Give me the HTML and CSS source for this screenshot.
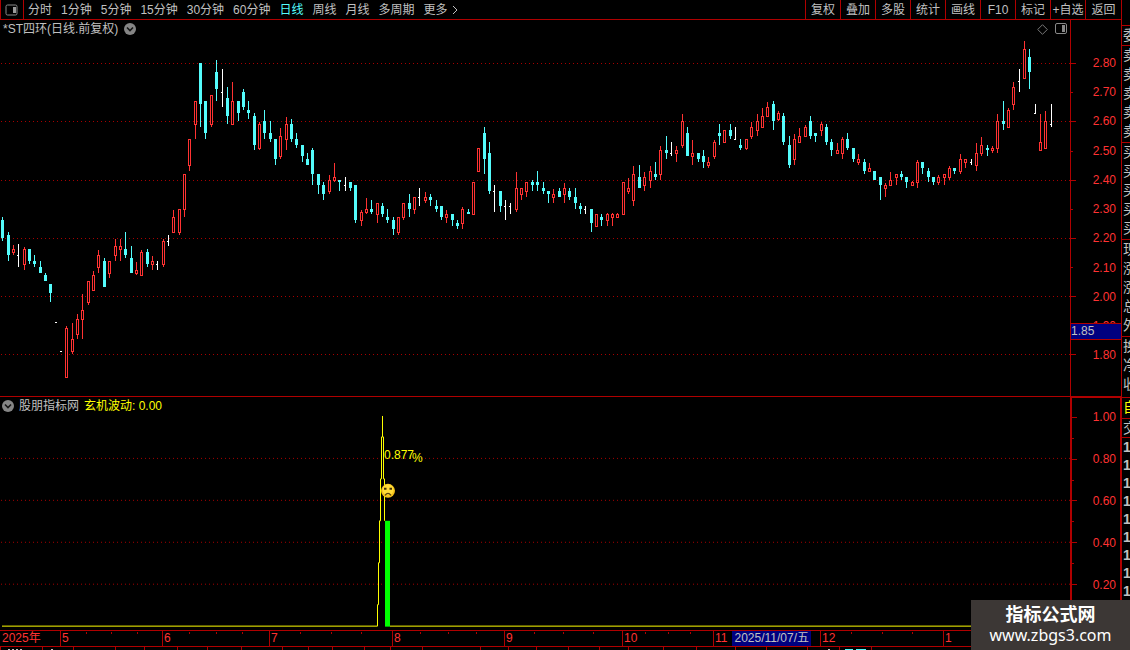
FILE: index.html
```html
<!DOCTYPE html>
<html lang="zh-CN">
<head>
<meta charset="utf-8">
<title>*ST四环 日线</title>
<link rel="stylesheet" href="styles.css">
</head>
<body>
<div class="terminal">
  <main class="workspace">
    <header class="toolbar">
      <button class="layout-toggle" aria-label="布局">
        <svg width="14" height="12" viewBox="0 0 14 12"><rect x="1" y="1" width="11" height="10" rx="1.5" fill="none" stroke="#8a8a8a"/><rect x="8" y="3" width="3" height="6" fill="#9a9a9a"/></svg>
      </button>
      <nav class="periods">
        <button>分时</button><button>1分钟</button><button>5分钟</button><button>15分钟</button><button>30分钟</button><button>60分钟</button><button class="active">日线</button><button>周线</button><button>月线</button><button>多周期</button><button class="more">更多<svg width="6" height="10" viewBox="0 0 6 10"><path d="M1 1L5 5L1 9" fill="none" stroke="#c0c0c0"/></svg></button>
      </nav>
      <div class="tools">
        <button>复权</button><button>叠加</button><button>多股</button><button>统计</button><button>画线</button><button>F10</button><button>标记</button><button>+自选</button><button>返回</button>
      </div>
    </header>

    <section class="panel price-panel">
      <div class="plot">
        <svg class="fill" id="price-chart" viewBox="0 20 1070 376" preserveAspectRatio="none" shape-rendering="crispEdges"></svg>
        <div class="caption">
          <span>*ST四环(日线.前复权)</span>
          <button class="icon" aria-label="展开"><svg width="12" height="12" viewBox="0 0 12 12"><circle cx="6" cy="6" r="6" fill="#858585"/><path d="M3 4.5L6 7.5L9 4.5" fill="none" stroke="#151515" stroke-width="1.6"/></svg></button>
          <div class="caption-tools">
            <button class="icon" aria-label="标注"><svg width="11" height="11" viewBox="0 0 11 11"><path d="M5.5 .7L10.3 5.5L5.5 10.3L.7 5.5Z" fill="none" stroke="#777"/></svg></button>
            <button class="icon" aria-label="侧栏"><svg width="12" height="12" viewBox="0 0 12 12"><rect x=".5" y=".5" width="11" height="10" rx="1.5" fill="none" stroke="#888"/><rect x="7" y="2" width="3" height="7" fill="#888"/></svg></button>
          </div>
        </div>
      </div>
      <div class="axis">
        <svg class="fill" id="price-ticks" viewBox="1071 20 50 376" preserveAspectRatio="none" shape-rendering="crispEdges"></svg>
        <div class="scale price-scale"><span>2.80</span><span>2.70</span><span>2.60</span><span>2.50</span><span>2.40</span><span>2.30</span><span>2.20</span><span>2.10</span><span>2.00</span><span>1.90</span><span>1.80</span></div>
        <div class="price-marker">1.85</div>
      </div>
    </section>

    <section class="panel indicator-panel">
      <div class="plot">
        <svg class="fill" id="indicator-chart" viewBox="0 397 1070 233" preserveAspectRatio="none">
          <g id="indicator-grid" shape-rendering="crispEdges"></g>
          <path shape-rendering="crispEdges" fill="none" stroke="#ffff00" d="M2 626.5H377.5V605H378.5V563H379.5V521H380.5V479H381.5V437H382.5V416M382.5 437H383.5V479H384.5V521M390 626.5H1070"/>
          <rect x="385" y="521" width="5" height="106" fill="#00ff00"/>
          <g class="signal"><text x="384" y="459">0.877</text><text x="412" y="462">%</text></g>
          <circle cx="388" cy="491" r="7" fill="#f5c21b"/><circle cx="388" cy="490" r="5.5" fill="#ffdc38"/>
          <path d="M384 488h2.5v2H384zM389.5 488h2.5v2h-2.5z" fill="#443000"/>
          <path d="M385 495.5Q388 491.5 391 495.5" fill="none" stroke="#59420a" stroke-width="1.2"/>
        </svg>
        <div class="caption">
          <button class="icon" aria-label="指标菜单"><svg width="12" height="12" viewBox="0 0 12 12"><circle cx="6" cy="6" r="6" fill="#858585"/><path d="M3 4.5L6 7.5L9 4.5" fill="none" stroke="#151515" stroke-width="1.6"/></svg></button>
          <span>股朋指标网</span><span class="value">玄机波动: 0.00</span>
        </div>
      </div>
      <div class="axis">
        <svg class="fill" id="indicator-ticks" viewBox="1072 397 48 233" preserveAspectRatio="none" shape-rendering="crispEdges"></svg>
        <div class="scale indicator-scale"><span>1.00</span><span>0.80</span><span>0.60</span><span>0.40</span><span>0.20</span></div>
      </div>
    </section>

    <footer class="timeline">
      <svg class="fill" id="time-ticks" viewBox="0 630 1121 20" preserveAspectRatio="none" shape-rendering="crispEdges"></svg>
      <div class="months"><span>2025年</span><span>5</span><span>6</span><span>7</span><span>8</span><span>9</span><span>10</span><span>11<time datetime="2025-11-07">2025/11/07/五</time></span><span>12</span><span>1</span></div>
    </footer>
  </main>

  <aside class="quotes">
    <div class="head">委</div>
    <div class="five"><span>卖</span><span>卖</span><span>卖</span><span>卖</span><span>卖</span></div>
    <div class="five"><span>买</span><span>买</span><span>买</span><span>买</span><span>买</span></div>
    <div class="five"><span>现</span><span>涨</span><span>涨</span><span>总</span><span>外</span></div>
    <div class="three"><span>换</span><span>净</span><span>收</span></div>
    <div class="tab">自</div>
    <div class="deal">交</div>
    <div class="times"><span>1</span><span>1</span><span>1</span><span>1</span><span>1</span><span>1</span><span>1</span><span>1</span><span>1</span></div>
  </aside>
  <div class="site-badge"><strong>指标公式网</strong><span>www.zbgs3.com</span></div>
</div>
<script src="chart.js"></script>
</body>
</html>
```

FILE: styles.css
```css
* { box-sizing: border-box; }
body { margin: 0; background: #000; color: #c0c0c0; font: 12px/16px "Liberation Sans", "Noto Sans CJK SC", sans-serif; }
button { margin: 0; padding: 0; border: 0; background: none; color: inherit; font: inherit; white-space: nowrap; }
svg { display: block; }

.terminal { position: relative; display: flex; height: 100vh; overflow: hidden; }
.workspace { flex: 1; min-width: 0; display: flex; flex-direction: column; }

.toolbar { display: flex; height: 20px; border-bottom: 1px solid #b00000; }
.layout-toggle { width: 24px; display: flex; align-items: center; justify-content: center; border: solid #b00000; border-width: 0 1px; }
.periods { display: flex; flex: 1; gap: 9px; padding-left: 4px; }
.periods .active { color: #54fcfc; }
.more { display: flex; align-items: center; gap: 4px; }
.tools { display: flex; }
.tools button { width: 35px; border-left: 1px solid #b00000; }
.tools button:last-child { width: 36px; }

.panel { display: flex; min-height: 0; }
.price-panel { flex: 377 1 0; border-bottom: 1px solid #b00000; }
.indicator-panel { flex: 233 1 0; }
.plot { position: relative; flex: 1; min-width: 0; }
.fill { position: absolute; inset: 0; width: 100%; height: 100%; }
.caption { position: relative; display: flex; align-items: center; gap: 6px; height: 18px; padding: 0 3px; }
.caption-tools { display: flex; align-items: center; gap: 7px; margin-left: auto; }
.icon { display: block; }
.indicator-panel .caption { padding: 0 2px; gap: 5px; }
.value, .signal { color: #ffff00; fill: #ffff00; }

.axis { position: relative; width: 51px; border-left: 1px solid #b00000; }
.indicator-panel .axis { border: solid #b00000; border-width: 1px 1px 0 2px; }
.scale { position: relative; display: flex; flex-direction: column; justify-content: space-between; color: #ff3232; text-align: right; padding-right: 5px; height: 100%; }
.price-scale { padding-top: 35px; padding-bottom: 33px; }
.indicator-scale { padding-top: 11px; padding-bottom: 37px; padding-right: 4px; }
.price-marker { position: absolute; top: 80.6%; left: 0; right: 0; height: 17px; border: solid #b00000; border-width: 1px 0; background: #000080; line-height: 15px; }

.timeline { position: relative; height: 20px; border-top: 1px solid #b00000; }
.months { position: relative; height: 16px; display: grid; grid-template-columns: 60fr 102fr 107fr 123fr 112fr 118fr 91fr 107fr 123fr 178fr; border-bottom: 1px solid #b00000; color: #ff3232; }
.months { grid-template-columns: 60fr 102fr 107fr 123fr 112fr 118fr 91fr 107fr 123fr 178fr; }
.months span { display: flex; min-width: 0; padding-left: 1px; border-left: 1px solid #b00000; line-height: 15px; }
.months span:first-child { border: 0; padding-left: 2px; }
.months time { margin-left: 5px; padding: 0 2px; background: #000080; color: #c0c0c0; white-space: nowrap; }

.quotes { width: 9px; overflow: hidden; border-left: 1px solid #b00000; font-size: 14px; line-height: 18px; padding-top: 25px; }
.quotes > div { overflow: hidden; padding-left: 1px; border-top: 1px solid #b00000; }
.quotes span { display: block; line-height: 19px; }
.head { height: 20px; }
.five { height: 97px; }
.three { height: 61px; }
.tab { height: 21px; color: #ffff00; }
.deal { height: 19px; }
.quotes .times span { line-height: 18px; font-weight: bold; }

.site-badge { position: absolute; right: 0; bottom: 0; width: 159px; height: 50px; display: flex; flex-direction: column; align-items: center; padding-top: 5px; background: #3c3735; color: #fff; }
.site-badge strong { font-size: 18px; line-height: 20px; }
.site-badge span { font: 16px/20px "Noto Sans", sans-serif; }
```

FILE: chart.js
```js
// u: rising bar, d: falling bar -> type x high open/close-top open/close-bottom low
// f: flat bar -> f x high low tick; n: dash -> n x y
const bars = `d 2 217 220 238 241;d 8 232 235 255 261;u 13 245 249 253 255;f 18 244 267 255;u 24 247 249 265 270
d 29 249 249 261 264;d 34 255 261 264 267;d 40 261 267 273 273;d 45 273 275 281 281;d 50 284 284 293 302
n 55 322;n 60 351;u 66 326 328 378 378;u 72 323 339 352 354;u 77 314 319 335 339
u 82 294 310 320 339;u 88 281 281 303 305;u 93 271 275 291 291;u 98 250 255 268 273;d 104 258 261 287 287
u 109 261 261 274 278;u 115 239 246 256 261;u 120 239 246 250 261;d 125 232 249 255 258;d 131 246 258 273 273
u 136 262 270 274 275;u 141 250 252 276 276;d 147 249 252 264 267;u 152 256 261 265 270;f 157 261 270 264
u 163 239 241 265 267;f 168 235 246 241;u 173 210 217 233 233;u 179 209 209 233 235;u 184 174 174 210 217
u 189 139 139 166 171;u 195 101 101 125 139;d 200 63 63 104 127;d 205 101 101 133 139;u 211 95 95 125 127
d 216 60 72 89 101;f 222 69 107 92;d 227 87 98 116 124;u 232 82 101 125 125;d 238 101 101 113 121
d 243 89 92 107 110;d 248 101 110 113 119;d 254 113 116 145 150;u 259 122 124 149 150;d 264 110 121 133 139
d 270 121 133 139 142;d 275 139 139 159 165;u 280 128 136 157 159;u 286 117 124 140 150;d 291 119 124 139 142
d 296 133 139 145 148;d 302 145 145 156 162;d 307 153 159 165 165;d 312 148 150 174 185;d 318 174 174 185 194
d 323 182 185 194 200;u 329 175 180 192 194;u 334 163 177 181 182;d 339 180 180 182 191;f 345 177 191 185
d 350 182 182 188 191;d 355 185 185 220 223;u 361 210 212 221 226;u 366 198 209 213 214;d 371 200 209 212 214
u 377 203 203 215 223;d 382 203 206 214 217;d 387 209 217 220 223;d 393 217 220 229 235;u 398 217 217 233 235
u 403 203 203 218 220;d 409 194 203 209 217;u 414 197 197 210 214;f 419 188 206 197;u 425 192 197 201 203
d 430 194 197 200 206;d 436 200 206 209 212;d 441 206 206 217 220;u 446 210 214 218 223;d 452 214 214 220 226
d 457 220 223 226 229;u 462 207 209 224 229;d 468 209 212 214 214;u 473 182 182 215 215;u 478 148 148 172 172
d 484 127 133 159 174;d 489 142 153 191 194;f 494 185 212 191;d 500 191 191 206 212;f 505 200 220 206
f 510 203 214 206;u 516 172 188 210 212;u 521 188 188 195 200;u 526 182 182 192 197;d 532 180 182 185 191
d 537 171 182 185 191;d 543 182 188 191 194;d 548 191 191 194 203;u 553 189 194 198 203;d 559 188 191 197 197
u 564 183 188 195 203;d 569 188 191 197 200;d 575 188 197 203 209;d 580 203 206 209 214;f 585 206 214 209
d 591 209 209 223 232;u 596 214 214 227 227;d 601 214 217 220 226;u 607 213 214 221 226;u 612 213 214 218 226
u 617 213 214 218 218;u 623 182 182 215 215;u 628 178 188 192 194;u 633 166 174 201 206;d 639 165 177 188 188
u 644 172 177 186 191;u 650 166 171 181 188;d 655 162 174 177 180;u 660 146 150 175 180;d 666 136 150 153 159
f 671 142 156 153;u 676 146 150 154 162;u 682 114 121 146 148;d 687 127 133 156 156;u 692 140 153 157 165
d 698 153 153 159 162;d 703 150 156 162 168;u 708 157 162 166 168;u 714 140 142 157 159;d 719 124 133 136 145
u 724 130 130 143 143;d 730 124 130 136 139;f 735 127 140 139;d 740 139 145 148 150;u 746 139 139 149 150
u 751 122 127 137 139;u 757 114 121 131 136;u 762 108 116 128 128;u 767 102 107 117 117;d 773 101 104 121 130
u 778 111 113 120 121;d 783 113 116 142 145;d 789 136 145 165 168;u 794 134 139 160 165;u 799 128 136 143 143
u 805 125 127 137 137;d 810 116 121 136 139;d 815 133 133 136 142;u 821 122 124 131 136;d 826 124 127 142 145
d 831 139 142 150 156;u 837 143 150 154 154;u 842 137 139 154 159;d 847 133 139 148 150;d 853 148 148 159 162
u 858 154 159 163 165;d 864 159 162 171 174;u 869 163 168 172 172;d 874 171 171 180 180;d 880 177 177 185 200
u 885 183 185 189 197;u 890 172 180 186 186;u 896 174 174 178 185;d 901 171 174 177 180;d 906 177 177 182 188
u 912 181 182 186 186;u 917 160 162 183 188;d 922 162 162 168 174;d 928 168 171 177 182;d 933 177 177 182 185
u 938 175 177 183 185;u 944 174 174 178 185;u 949 166 168 178 180;d 954 168 168 171 174;u 960 154 159 172 174
u 965 159 159 163 168;f 971 159 165 162;u 976 143 153 166 171;u 981 137 145 154 156;d 987 145 148 150 156
u 992 146 148 151 153;u 997 114 121 149 153;d 1003 101 121 124 130;u 1008 108 110 128 128;u 1013 82 87 105 110
f 1019 69 92 81;u 1024 41 49 79 79;d 1029 49 57 72 89;f 1035 104 114 113;u 1040 114 142 151 151
u 1045 111 121 149 149;f 1051 104 127 124`;

const box = (x, y, w, h) => `M${x} ${y}h${w}v${h}h${-w}z`;
const fills = { u: "", d: "", f: "" };
for (const bar of bars.split(/[;\n]/)) {
  const [type, ...values] = bar.split(" ");
  const [x, a, b, c, d] = values.map(Number);
  if (type === "n") {
    fills.f += box(x, a, 2, 1);
  } else if (type === "f") {
    fills.f += box(x, a, 1, b - a) + box(x - 1, c, 1, 1);
  } else if (type === "d") {
    fills.d += box(x - 1, b, 3, c - b);
    if (b > a) fills.d += box(x, a, 1, b - a);
    if (d > c) fills.d += box(x, c, 1, d - c);
  } else {
    fills.u += box(x - 1, b, 1, c - b) + box(x + 1, b, 1, c - b) + box(x, b, 1, 1) + box(x, c - 1, 1, 1);
    if (b > a) fills.u += box(x, a, 1, b - a);
    if (d > c) fills.u += box(x, c, 1, d - c);
  }
}

const dotted = rows => rows.map(y =>
  `<path d="M1 ${y}.5H1070" stroke="#a80000" stroke-dasharray="1 3"/>`).join("");
const path = (d, fill) => `<path d="${d}" fill="${fill}"/>`;
const byId = id => document.getElementById(id);

byId("price-chart").innerHTML = dotted([63, 121, 180, 238, 296, 354])
  + path(fills.u, "#ff3232") + path(fills.d, "#54fcfc") + path(fills.f, "#ffffff");
byId("indicator-grid").innerHTML = dotted([458, 500, 542, 584]);

const ticks = (x, major, minor) => path(
  major.map(y => box(x, y, 5, 1)).join("") + minor.map(y => box(x, y, 2, 1)).join(""), "#b00000");
byId("price-ticks").innerHTML = ticks(1071, [63, 121, 180, 238, 296, 354], [92, 151, 209, 267]);
byId("indicator-ticks").innerHTML = ticks(1072, [416, 458, 500, 542, 584], [437, 479, 521, 563, 605]);

const weeks = [86, 111, 137, 189, 216, 242, 300, 331, 361, 420, 448, 476, 534, 563, 593, 645, 668, 690, 851, 882, 912];
const lower = [0, 42, 73, 115, 144, 177, 207, 241, 282, 308, 332, 364, 390, 422, 480, 508, 536, 568, 599, 628, 663, 696, 735, 766, 807, 839, 871];
byId("time-ticks").innerHTML = path(
  weeks.map(x => box(x, 631, 1, 2)).join("") + lower.map(x => box(x, 647, 1, 3)).join(""), "#b00000")
  + path([8, 12, 16, 20, 51, 828].map(x => box(x, 649, 2, 1)).join(""), "#c0c0c0")
  + path(box(845, 649, 8, 1) + box(856, 649, 10, 1), "#54fcfc");
```
